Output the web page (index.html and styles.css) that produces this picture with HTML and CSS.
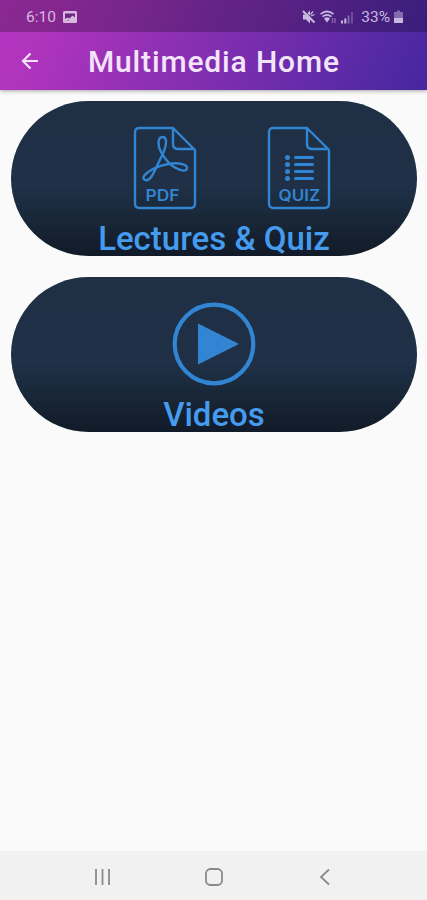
FILE: index.html
```
<!DOCTYPE html>
<html lang="en">
<head>
<meta charset="utf-8">
<meta name="viewport" content="width=device-width, initial-scale=1">
<title>Multimedia Home</title>
<link rel="stylesheet" href="styles.css">
</head>
<body>
<div class="screen">
  <header class="top">
    <div class="status">
      <div class="status-left">
        <span class="clock">6:10</span>
        <svg class="ic-photo" width="14" height="12" viewBox="0 0 14 12"><rect width="14" height="12" rx="1.500" fill="currentColor"/><path d="M2 2.500h10v4L9.500 4.500 6.500 7.500 4.500 6.500 2 8z" fill="#6b2782"/><path d="M3 10l2-1.500 2 1.500z" fill="#6b2782" opacity=".4"/></svg>
      </div>
      <div class="status-right">
        <svg width="14" height="14" viewBox="0 0 14 14" fill="currentColor"><path d="M1 4.500h3l4-4v13L4 9.500H1z"/><path d="M8.500 4.500l2.500-3M9 6l3.500-1.500" stroke="currentColor" stroke-width="1.300"/><path d="M1 1l11.500 11.500" stroke="currentColor" stroke-width="2.200"/><path d="M2.500 .5l10.500 10.500" stroke="#42216f" stroke-width=".7"/></svg>
        <svg class="ic-wifi" width="17" height="14" viewBox="0 0 17 14" fill="none" stroke="currentColor"><path d="M.5 4.200q6.500-5.400 13 0" stroke-width="1.700"/><path d="M2.500 6.700q4.500-3.800 9 0" stroke-width="1.600"/><path d="M4 8.500q3-2.400 6 0l-3 4z" fill="currentColor" stroke="none"/><path d="M12.500 8v5M15 8v5" opacity=".45" stroke-width="1.400"/></svg>
        <svg class="ic-signal" width="13" height="13" viewBox="0 0 13 13" fill="currentColor"><rect x="0" y="9.500" width="2" height="3"/><rect x="3.300" y="7.500" width="2" height="5"/><rect x="6.600" y="4.500" width="2" height="8" opacity=".45"/><rect x="10" y="1" width="2" height="11.500" opacity=".3"/></svg>
        <span class="percent">33%</span>
        <svg class="ic-battery" width="9" height="14" viewBox="0 0 9 14" fill="currentColor"><path d="M3 .5h3V2h3v6H0V2h3z" opacity=".5"/><path d="M0 8h9v5H0z"/></svg>
      </div>
    </div>
    <div class="appbar">
      <svg class="back" width="18" height="18" viewBox="0 0 18 18" fill="none" stroke="currentColor" stroke-width="2.200"><path d="M17 9H2M9.500 1.500L2 9l7.500 7.500"/></svg>
      <h1 class="title">Multimedia Home</h1>
    </div>
  </header>

  <main class="cards">
    <section class="card">
      <div class="icons">
        <svg width="64" height="84" viewBox="0 0 64 84" fill="none" stroke="currentColor" stroke-width="2.400" stroke-linejoin="round">
          <path d="M40 2H6.500Q2 2 2 6.500v71Q2 82 6.500 82h51q4.500 0 4.500-4.500V24zM40 2v16q0 5 5 5h16.500"/>
          <path d="M28 26C32 33 36 38 41 41S53 46.500 54 42.500S46 36.500 39 37.500S25 40 19 43.500S7.500 52 12 54S20 48.500 23.500 41S28.500 31 31 25S34.500 11 29.500 11S24.500 20 28 26z"/>
          <text class="doc-label" x="12.500" y="74.500" textLength="34" lengthAdjust="spacingAndGlyphs">PDF</text>
        </svg>
        <svg width="64" height="84" viewBox="0 0 64 84" fill="none" stroke="currentColor" stroke-width="2.400" stroke-linejoin="round">
          <path d="M40 2H6.500Q2 2 2 6.500v71Q2 82 6.500 82h51q4.500 0 4.500-4.500V24zM40 2v16q0 5 5 5h16.500"/>
          <path d="M28.500 31.500h17M28.500 38.500h17M28.500 45.500h17M28.500 52.500h17" stroke-width="3" stroke-linecap="round"/>
          <path d="M20.500 31.500h.01M20.500 38.500h.01M20.500 45.500h.01M20.500 52.500h.01" stroke-width="5" stroke-linecap="round"/>
          <text class="doc-label" x="11.500" y="74.500" textLength="41.500" lengthAdjust="spacingAndGlyphs">QUIZ</text>
        </svg>
      </div>
      <h2 class="label">Lectures &amp; Quiz</h2>
    </section>
    <section class="card">
      <div class="icons">
        <svg width="84" height="84" viewBox="0 0 84 84"><circle cx="42" cy="42" r="39.300" fill="none" stroke="currentColor" stroke-width="4.200"/><path d="M26 21.500v41L67 42z" fill="currentColor"/></svg>
      </div>
      <h2 class="label">Videos</h2>
    </section>
  </main>

  <nav class="nav">
    <svg width="18" height="18" viewBox="0 0 18 18" stroke="currentColor" stroke-width="1.800"><path d="M3 1v16M9.500 1v16M16 1v16"/></svg>
    <svg width="18" height="18" viewBox="0 0 18 18" fill="none" stroke="currentColor" stroke-width="1.800"><rect x="1" y="1" width="16" height="16" rx="4.500"/></svg>
    <svg width="18" height="18" viewBox="0 0 18 18" fill="none" stroke="currentColor" stroke-width="1.800"><path d="M13 1.500L5 9l8 7.500"/></svg>
  </nav>
</div>
</body>
</html>
```
FILE: styles.css
```
* { box-sizing: border-box; }

body {
  margin: 0;
  font-family: Roboto, "Liberation Sans", sans-serif;
  background: #fafafa;
}

svg { display: block; flex: none; }

.screen {
  width: 427px;
  height: 900px;
  display: flex;
  flex-direction: column;
}

.top {
  height: 90px;
  background: linear-gradient(115deg, #b535c0 0%, #b034bd 12%, #4527a0 100%);
  box-shadow: 0 1px 4px rgba(0, 0, 0, 0.35);
}

.status {
  height: 32px;
  padding: 2px 24px 0 26px;
  display: flex;
  align-items: center;
  justify-content: space-between;
  background: rgba(0, 0, 0, 0.24);
  color: #d8b9df;
  font-size: 15.5px;
}

.status-left,
.status-right {
  display: flex;
  align-items: center;
}

.ic-photo { margin-left: 7px; }
.ic-wifi { margin-left: 4px; }
.ic-signal { margin-left: 4px; }
.status-right { color: #c6b8df; }
.percent { margin-left: 7px; font-size: 15.5px; }
.ic-battery { margin-left: 4px; }

.appbar {
  height: 58px;
  padding-left: 21px;
  display: flex;
  align-items: center;
  color: #f3e4fa;
}

.title {
  margin: 0 0 0 49px;
  padding-top: 2px;
  font-size: 30px;
  font-weight: 500;
  line-height: 56px;
  letter-spacing: 0.85px;
  white-space: nowrap;
}

.cards {
  flex: 1;
  padding: 11px 10px 0 11px;
  display: flex;
  flex-direction: column;
  gap: 21px;
}

.card {
  height: 155px;
  padding-top: 25px;
  border-radius: 78px;
  background: linear-gradient(#1f3045 0%, #1f3047 56%, #192838 75%, #111a28 100%);
  color: #3185d2;
}

.icons {
  display: flex;
  justify-content: center;
  gap: 70px;
}

.card:first-child .icons { padding-left: 36px; }

.doc-label {
  fill: currentColor;
  stroke: none;
  font-family: Inter, sans-serif;
  font-size: 15.5px;
  font-weight: 600;
}

.label {
  margin: 8px 0 0;
  font-size: 33px;
  font-weight: 500;
  line-height: 41px;
  text-align: center;
  color: #459bed;
}

.nav {
  height: 49px;
  padding: 2px 93px 0;
  display: flex;
  align-items: center;
  justify-content: space-between;
  background: #f1f1f1;
  color: #8a8a8a;
}
```
